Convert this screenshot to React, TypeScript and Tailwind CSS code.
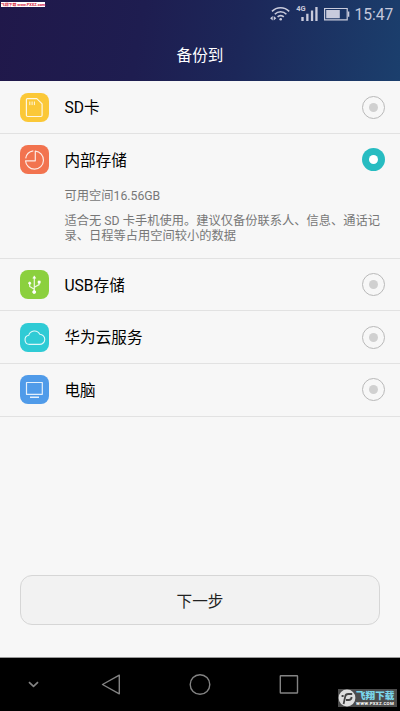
import React from "react"
import { clsx } from "clsx"

const icons = {
  sd: (
    <>
      <path d="M7.4 5.6h9.4l5.3 5.3v11.4a1.2 1.2 0 0 1-1.2 1.2H7.6a1.2 1.2 0 0 1-1.2-1.2V6.6a1 1 0 0 1 1-1z" strokeWidth="1.2" />
      <path d="M9.8 8.5v3.6M12.1 8.5v3.6M14.4 8.5v3.6" />
    </>
  ),
  internal: (
    <>
      <path d="M15.3 6.2a9 9 0 1 1-9.8 9.6h9.8z" strokeWidth="1.2" />
      <path d="M5.7 13.4a9 9 0 0 1 7.6-7.5" strokeWidth="1.2" />
    </>
  ),
  usb: (
    <>
      <path d="M14.3 8v14M14.3 19.2l-4.6-2.8v-2.6M14.3 17.2l4.8-2.6v-2.4" strokeWidth="1.2" />
      <circle cx="14.2" cy="22" r="1.5" fill="white" />
      <circle cx="9.7" cy="13.2" r="1.1" fill="white" />
      <path d="M14.3 5.8l1.5 2.5h-3zM18 10.9h2.3v2.3H18z" fill="white" strokeWidth="0.6" />
    </>
  ),
  cloud: (
    <path d="M9.5 21.4a4.6 4.6 0 0 1-.8-9.1 6 6 0 0 1 11.1-1.1 5.1 5.1 0 0 1-.3 10.2z" strokeWidth="1.1" />
  ),
  pc: (
    <>
      <path d="M6.5 7.5h15.8v11.8H6.5z" strokeWidth="1.2" />
      <path d="M10 22.3h9" strokeWidth="1.4" />
    </>
  ),
}

function Tile({ name, color }: { name: keyof typeof icons; color: string }) {
  return (
    <svg viewBox="0 0 29 29" className={clsx("size-[29px] shrink-0 rounded-[8px]", color)} fill="none" stroke="white" strokeOpacity="0.85" strokeWidth="1" strokeLinejoin="round">
      {icons[name]}
    </svg>
  )
}

function Radio({ checked }: { checked?: boolean }) {
  return (
    <span
      className={clsx(
        "flex size-[23px] shrink-0 items-center justify-center rounded-full",
        checked ? "bg-[#27bcc1]" : "border border-[#b9b9b9]"
      )}
    >
      <span className={clsx("size-[9px] rounded-full", checked ? "bg-white" : "bg-[#d0d0d0]")} />
    </span>
  )
}

type RowProps = {
  icon: keyof typeof icons
  color: string
  label: string
  checked?: boolean
  children?: React.ReactNode
}

function Row({ icon, color, label, checked, children }: RowProps) {
  return (
    <div className="border-b border-[#e2e2e2] pr-[15.5px] pl-5">
      <div className="flex h-[51.55px] items-center">
        <Tile name={icon} color={color} />
        <span className="ml-[15.5px] flex-1 pt-[2px] text-[15.6px] leading-5 text-black">{label}</span>
        <Radio checked={checked} />
      </div>
      {children}
    </div>
  )
}

function StatusBar() {
  return (
    <div className="flex h-7 items-center justify-end pr-[7px]">
      <svg width="81" height="28" viewBox="0 0 81 28" className="mr-[5px] shrink-0" fill="#c9cbdc">
        <g fill="none" stroke="#c9cbdc" strokeWidth="1.6">
          <path d="M3 11.4a12 12 0 0 1 17.2 0" />
          <path d="M5.8 14.2a8.2 8.2 0 0 1 11.6 0" />
          <path d="M8.6 16.9a4.3 4.3 0 0 1 6.2 0" />
        </g>
        <circle cx="11.7" cy="19.2" r="1.3" />
        <path d="M3.7 16l-2.6 2.2 2.6 2.2zM4.7 16l2.6 2.2-2.6 2.2z" />
        <text x="27.2" y="10.6" className="font-[Roboto] text-[7.5px] font-bold">4G</text>
        <path d="M32.3 17h2.4v4h-2.4zM37.2 13.8h2.3V21h-2.3zM41.9 10.6h2.3V21h-2.3zM46.3 7h2.3v14h-2.3z" />
        <path d="M55.6 8.5h22.6v11.3H55.6z" fill="none" stroke="#c9cbdc" strokeWidth="1.2" />
        <path d="M57.2 10.1h13.6v8.2H57.2zM79 11.4h1.3v5.4H79z" />
      </svg>
      <span className="w-[38.5px] pt-[2px] text-[15.6px] leading-7 text-[#c5c8dc]">15:47</span>
    </div>
  )
}

function NavBar() {
  return (
    <div className="relative h-[54px] shrink-0 border-t border-[#999] bg-black">
      <svg width="400" height="53" viewBox="0 0 400 53" fill="none" stroke="#838383" strokeWidth="1.4" strokeLinejoin="round">
        <path d="M29 24.2l4.5 4.2 4.5-4.2" strokeWidth="1.7" />
        <path d="M119.3 17.2v18.6L102.5 26.5z" />
        <circle cx="200" cy="26.5" r="9.8" />
        <rect x="280.3" y="17.8" width="17.2" height="17.2" rx="0.5" />
      </svg>
      <div className="absolute top-[31px] left-[338px] flex h-[18px] w-[59px] items-center bg-[#4c4c4c]">
        <svg viewBox="0 0 18 18" className="size-[18px] shrink-0">
          <circle cx="9" cy="9" r="8.4" fill="#dedede" />
          <path d="M5.6 15L7.2 7.6q.5-2.6 3-2.6h4M3.6 7h2M8 11h2.8q2.4 0 2.9-3" fill="none" stroke="#444" strokeWidth="1.8" />
        </svg>
        <div className="flex flex-col whitespace-nowrap">
          <span className="text-[9.6px] leading-[11px] font-black text-[#7bd7ec]">飞翔下载</span>
          <span className="text-[4.4px] leading-[5px] font-bold tracking-[0.3px] text-white">WWW.PXXZ.COM</span>
        </div>
      </div>
    </div>
  )
}

export default function App() {
  return (
    <div className="flex h-[711px] w-[400px] flex-col overflow-hidden bg-[#f7f7f7] font-[Roboto,'Noto_Sans_CJK_SC',sans-serif]">
      <header className="relative h-[81px] shrink-0 bg-[linear-gradient(100deg,#20184a_0%,#1e1d50_35%,#1c2759_60%,#1b3f6d_100%)]">
        <StatusBar />
        <h1 className="mt-[16px] text-center text-[15.6px] leading-6 text-white">备份到</h1>
        <div className="absolute top-[2px] left-[1px] flex h-[5px] w-11 items-center justify-center bg-white text-[3.9px] leading-[5px] font-bold whitespace-nowrap text-[#d5213b]">
          飞翔下载 www.PXXZ.com
        </div>
      </header>

      <main className="flex flex-1 flex-col pt-[0.45px]">
        <Row icon="sd" color="bg-[#fbc837]" label="SD卡" />
        <Row icon="internal" color="bg-[#f2734f]" label="内部存储" checked>
          <div className="h-[72.35px] pl-[44.5px] text-[12.25px] leading-[15px] text-[#777]">
            <p className="pt-[3.5px]">可用空间16.56GB</p>
            <p className="mt-[10px] whitespace-nowrap">
              适合无 SD 卡手机使用。建议仅备份联系人、信息、通话记
              <br />
              录、日程等占用空间较小的数据
            </p>
          </div>
        </Row>
        <Row icon="usb" color="bg-[#8bd03e]" label="USB存储" />
        <Row icon="cloud" color="bg-[#2fcbd5]" label="华为云服务" />
        <Row icon="pc" color="bg-[#509be9]" label="电脑" />

        <button className="mx-5 mt-auto mb-8 h-[50px] rounded-xl border border-[#d6d6d6] bg-[#f2f2f2] pt-[5px] text-[15.6px] text-[#222]">
          下一步
        </button>
      </main>

      <NavBar />
    </div>
  )
}
